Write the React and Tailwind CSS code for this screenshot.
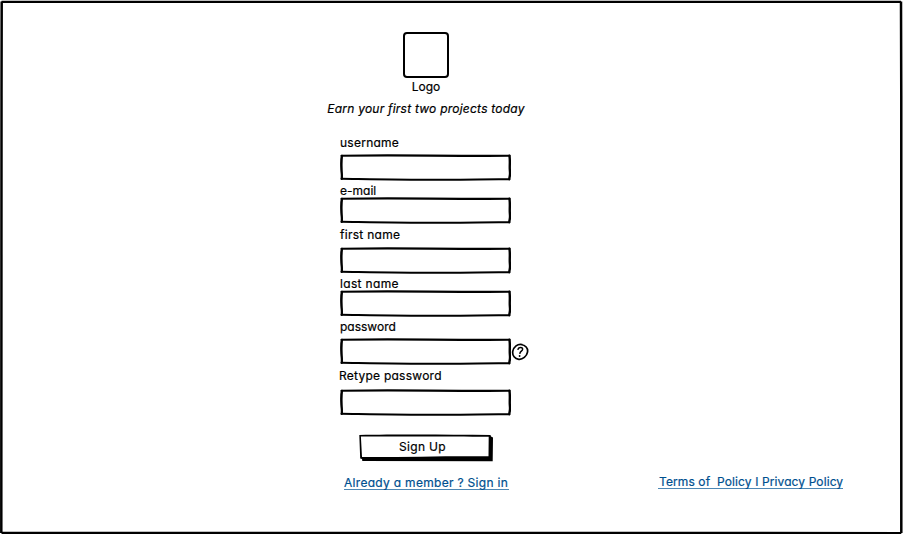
import React from "react";

const fields = [
  { id: "username", label: "username", type: "text", labelClass: "mt-0 tracking-[0.25px]", boxClass: "mt-[5px]" },
  { id: "email", label: "e-mail", type: "email", labelClass: "mt-[2px] tracking-[0px]", boxClass: "mt-0" },
  { id: "first", label: "first name", type: "text", labelClass: "mt-[3px] tracking-[0.28px]", boxClass: "mt-[6px]" },
  { id: "last", label: "last name", type: "text", labelClass: "mt-[2px] tracking-[0.33px]", boxClass: "mt-0" },
  { id: "password", label: "password", type: "password", labelClass: "mt-[2px] tracking-[0px]", boxClass: "mt-[5px]", help: true },
  { id: "retype", label: "Retype password", type: "password", labelClass: "mt-[3px] -ml-px tracking-[0.25px]", boxClass: "mt-[7px]" },
];

function SketchBorder() {
  return (
    <svg className="pointer-events-none absolute inset-0" width="171" height="27" viewBox="0 0 171 27" fill="none" stroke="#000" strokeLinecap="round" strokeLinejoin="round">
      <path d="M1.5 1.7C40 1.2 65 1.4 90 1.6S140 2 169.5 1.8" strokeWidth="2.1" />
      <path d="M169.5 1.8C170.3 8 169.4 12 169.9 17S169.5 22 169.3 25.3" strokeWidth="2.4" />
      <path d="M1.6 24.8C35 25.3 70 26 105 25.8S145 25 169.3 25.3" strokeWidth="2" />
      <path d="M1.9 1.8C.8 6 1.2 12 1.4 16S2.2 20 1.7 24.8" strokeWidth="2.2" />
      <path d="M2.3 2C1.6 8 1.7 14 2.2 24" strokeWidth="1.1" />
    </svg>
  );
}

function HelpIcon() {
  return (
    <svg className="shrink-0" width="18" height="18" viewBox="0 0 18 18" fill="none" stroke="#000" strokeLinecap="round" strokeLinejoin="round">
      <path d="M11 1.5C6.6.5 2.6 3.8 1.8 8.2S4 15.9 7.8 16.3s8-3 8.7-7.2S14.4 2.2 10 1.5" strokeWidth="1.7" />
      <path d="M7 6.2C7.8 4 11.8 3.7 11.6 6.3c-.1 1.8-2.3 1.9-2.7 4" strokeWidth="1.5" />
      <path d="M8.6 12.8v.2" strokeWidth="1.8" />
    </svg>
  );
}

function Frame() {
  return (
    <svg className="pointer-events-none absolute inset-0" width="903" height="535" viewBox="0 0 903 535" fill="none" stroke="#000" strokeLinejoin="round">
      <path d="M1.5 1.8C230 2.1 480 1.5 901 1.8" strokeWidth="2.2" />
      <path d="M901 1.5C901.8 180 900.8 360 901.3 533" strokeWidth="2.5" />
      <path d="M1.5 532.8C300 533.3 600 533 901.3 533" strokeWidth="2.2" />
      <path d="M1.7 1.5C1.2 180 1.8 360 1.3 533" strokeWidth="2.5" />
    </svg>
  );
}

export default function App() {
  return (
    <div className="relative flex h-[535px] w-[903px] justify-between overflow-hidden bg-white font-['Inter','Liberation_Sans',sans-serif] text-[12px] leading-[14px] whitespace-pre text-black [-webkit-text-stroke:0.2px_currentColor] [font-feature-settings:'cv11']">
      <Frame />
      <main className="ml-[326px] flex w-[200px] flex-col items-center pt-8">
        <div className="h-[46px] w-[46px] rounded-[4px] border-2 border-black" />
        <div className="mt-[2px]">Logo</div>
        <p className="mt-[8px] italic tracking-[0.23px]">Earn your first two projects today</p>
        <form className="mt-[19px] flex w-[172px] flex-col" onSubmit={(e) => e.preventDefault()}>
          {fields.map((f) => (
            <div key={f.id} className="flex flex-col">
              <label htmlFor={f.id} className={f.labelClass}><span className="relative top-px">{f.label}</span></label>
              <div className={`flex items-center ${f.boxClass}`}>
                <div className="relative h-[27px] w-[171px] shrink-0">
                  <SketchBorder />
                  <input id={f.id} type={f.type} className="h-full w-full bg-transparent px-2 outline-none" />
                </div>
                {f.help && <HelpIcon />}
              </div>
            </div>
          ))}
          <button className="relative mt-[18px] ml-[19px] h-[28px] w-[134px] pr-[7px] pb-[3px]">
            <svg className="pointer-events-none absolute inset-0" width="134" height="28" viewBox="0 0 134 28">
              <path d="M.3 1C35 .3 85 .4 131.5 1L132 2.5 134 3.5 133.7 27.2 3.3 27 3 25 1.2 24.5Z" fill="#000" />
              <path d="M1.9 2.6C45 2.4 95 2.4 129.7 2.8L129.5 22.3C85 21.9 45 23.2 3 23Z" fill="#fff" />
            </svg>
            <span className="relative tracking-[0.35px]">Sign Up</span>
          </button>
          <a href="#signin" className="mt-[12px] ml-1 h-[16px] w-[165px] border-b border-[#4d87b4] pt-[2px] tracking-[0.3px] text-[#00508f]">Already a member ? Sign in</a>
        </form>
      </main>
      <footer className="mr-[60px] mb-[46px] self-end">
        <a href="#terms" className="block h-[15px] w-[185px] border-b border-[#4d87b4] pt-px pl-px tracking-[0.1px] text-[#00508f]">Terms of  Policy I Privacy Policy</a>
      </footer>
    </div>
  );
}
